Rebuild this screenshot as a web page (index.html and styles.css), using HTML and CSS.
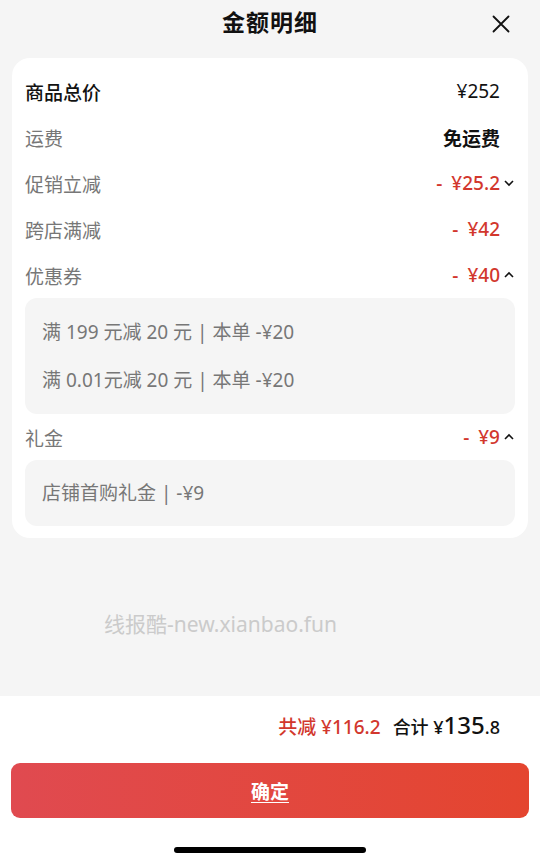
FILE: index.html
```html
<!DOCTYPE html>
<html lang="zh-CN">
  <head>
    <meta charset="UTF-8" />
    <meta name="viewport" content="width=device-width, initial-scale=1.0" />
    <title>金额明细</title>
    <link rel="stylesheet" href="styles.css">
  </head>
  <body>
    <div class="sheet">
      <div class="header">
        <h1 class="title">金额明细</h1>
        <button class="close" aria-label="关闭">
          <svg width="18" height="18" viewBox="0 0 18 18">
            <path d="M1.5 1.5 L16.5 16.5 M16.5 1.5 L1.5 16.5" stroke="#111" stroke-width="1.8" fill="none" stroke-linecap="round" />
          </svg>
        </button>
      </div>

      <div class="card">
        <div class="row">
          <span class="label dark">商品总价</span>
          <span class="value">¥252</span>
          <span class="arrow"></span>
        </div>
        <div class="row">
          <span class="label">运费</span>
          <span class="value bold">免运费</span>
          <span class="arrow"></span>
        </div>
        <div class="row">
          <span class="label">促销立减</span>
          <span class="value red"><i>-</i>¥25.2</span>
          <span class="arrow">
            <svg width="12" height="8" viewBox="0 0 12 8"><path d="M2 2 L6 6 L10 2" stroke="#111" stroke-width="1.6" fill="none" /></svg>
          </span>
        </div>
        <div class="row">
          <span class="label">跨店满减</span>
          <span class="value red"><i>-</i>¥42</span>
          <span class="arrow"></span>
        </div>
        <div class="row">
          <span class="label">优惠券</span>
          <span class="value red"><i>-</i>¥40</span>
          <span class="arrow">
            <svg width="12" height="8" viewBox="0 0 12 8"><path d="M2 6 L6 2 L10 6" stroke="#111" stroke-width="1.6" fill="none" /></svg>
          </span>
        </div>
        <div class="detail">
          <p>满 199 元减 20 元 | 本单 -¥20</p>
          <p>满 0.01元减 20 元 | 本单 -¥20</p>
        </div>
        <div class="row">
          <span class="label">礼金</span>
          <span class="value red"><i>-</i>¥9</span>
          <span class="arrow">
            <svg width="12" height="8" viewBox="0 0 12 8"><path d="M2 6 L6 2 L10 6" stroke="#111" stroke-width="1.6" fill="none" /></svg>
          </span>
        </div>
        <div class="detail single">
          <p>店铺首购礼金 | -¥9</p>
        </div>
      </div>

      <div class="watermark">线报酷-new.xianbao.fun</div>
    </div>

    <div class="footer">
      <div class="summary">
        <span class="saved">共减 ¥116.2</span>
        <span class="total">合计 ¥<b>135</b>.8</span>
      </div>
      <button class="confirm">确定</button>
      <div class="home-bar"></div>
    </div>
  </body>
</html>
```

FILE: styles.css
```css
* {
  padding: 0;
  margin: 0;
  box-sizing: border-box;
}

body {
  width: 540px;
  height: 865px;
  overflow: hidden;
  display: flex;
  flex-direction: column;
  background-color: #f5f5f5;
  font-family: "Noto Sans", "Noto Sans CJK SC", sans-serif;
  color: #111;
}

.sheet {
  flex: 1;
  display: flex;
  flex-direction: column;
}

.header {
  position: relative;
  height: 48px;
  padding-bottom: 6px;
  display: flex;
  justify-content: center;
  align-items: center;
}

.title {
  font-size: 23px;
  font-weight: 700;
  font-family: "Noto Sans CJK SC", sans-serif;
  letter-spacing: 1px;
}

.close {
  position: absolute;
  right: 30px;
  top: 15px;
  width: 18px;
  height: 18px;
  border: none;
  background: none;
}

.card {
  margin: 10px 12px 0;
  padding: 10px 13px 12px;
  background-color: #fff;
  border-radius: 18px;
}

.row {
  height: 46px;
  display: flex;
  align-items: center;
  font-size: 19px;
}

.label {
  flex: 1;
  color: #777;
  font-family: "Noto Sans CJK SC", sans-serif;
}

.label.dark {
  color: #111;
  font-weight: 500;
}

.value {
  color: #111;
  font-size: 19px;
}

.value.bold {
  font-weight: 700;
  font-family: "Noto Sans CJK SC", sans-serif;
}

.value.red {
  color: #d2372d;
  font-weight: 500;
}

.value i {
  font-style: normal;
  margin-right: 9px;
}

.arrow {
  width: 15px;
  display: flex;
  justify-content: flex-end;
  align-items: center;
}

.detail {
  padding: 10px 17px;
  background-color: #f5f5f5;
  border-radius: 12px;
}

.detail.single {
  padding: 9px 17px;
}

.detail p {
  height: 48px;
  line-height: 48px;
  font-size: 19px;
  color: #777;
}

.watermark {
  margin-top: 70px;
  padding-left: 104px;
  font-size: 21px;
  color: #cbcbcb;
}

.footer {
  height: 169px;
  padding: 12px 11px 0;
  background-color: #fff;
  display: flex;
  flex-direction: column;
  align-items: stretch;
}

.summary {
  height: 28px;
  padding-right: 29px;
  display: flex;
  justify-content: flex-end;
  align-items: baseline;
  gap: 12px;
}

.saved {
  color: #d2372d;
  font-size: 19px;
  font-weight: 500;
}

.total {
  font-size: 18px;
  font-weight: 500;
}

.total b {
  font-size: 24px;
  font-weight: 500;
}

.confirm {
  margin-top: 27px;
  height: 55px;
  border: none;
  border-radius: 9px;
  background: linear-gradient(90deg, #e04a50 0%, #e4452f 100%);
  color: #fff;
  font-size: 19px;
  font-weight: 700;
  font-family: "Noto Sans CJK SC", sans-serif;
  text-decoration: underline;
  text-underline-offset: 3px;
}

.home-bar {
  align-self: center;
  margin-top: 29px;
  width: 192px;
  height: 6px;
  border-radius: 3px;
  background-color: #000;
}
```
